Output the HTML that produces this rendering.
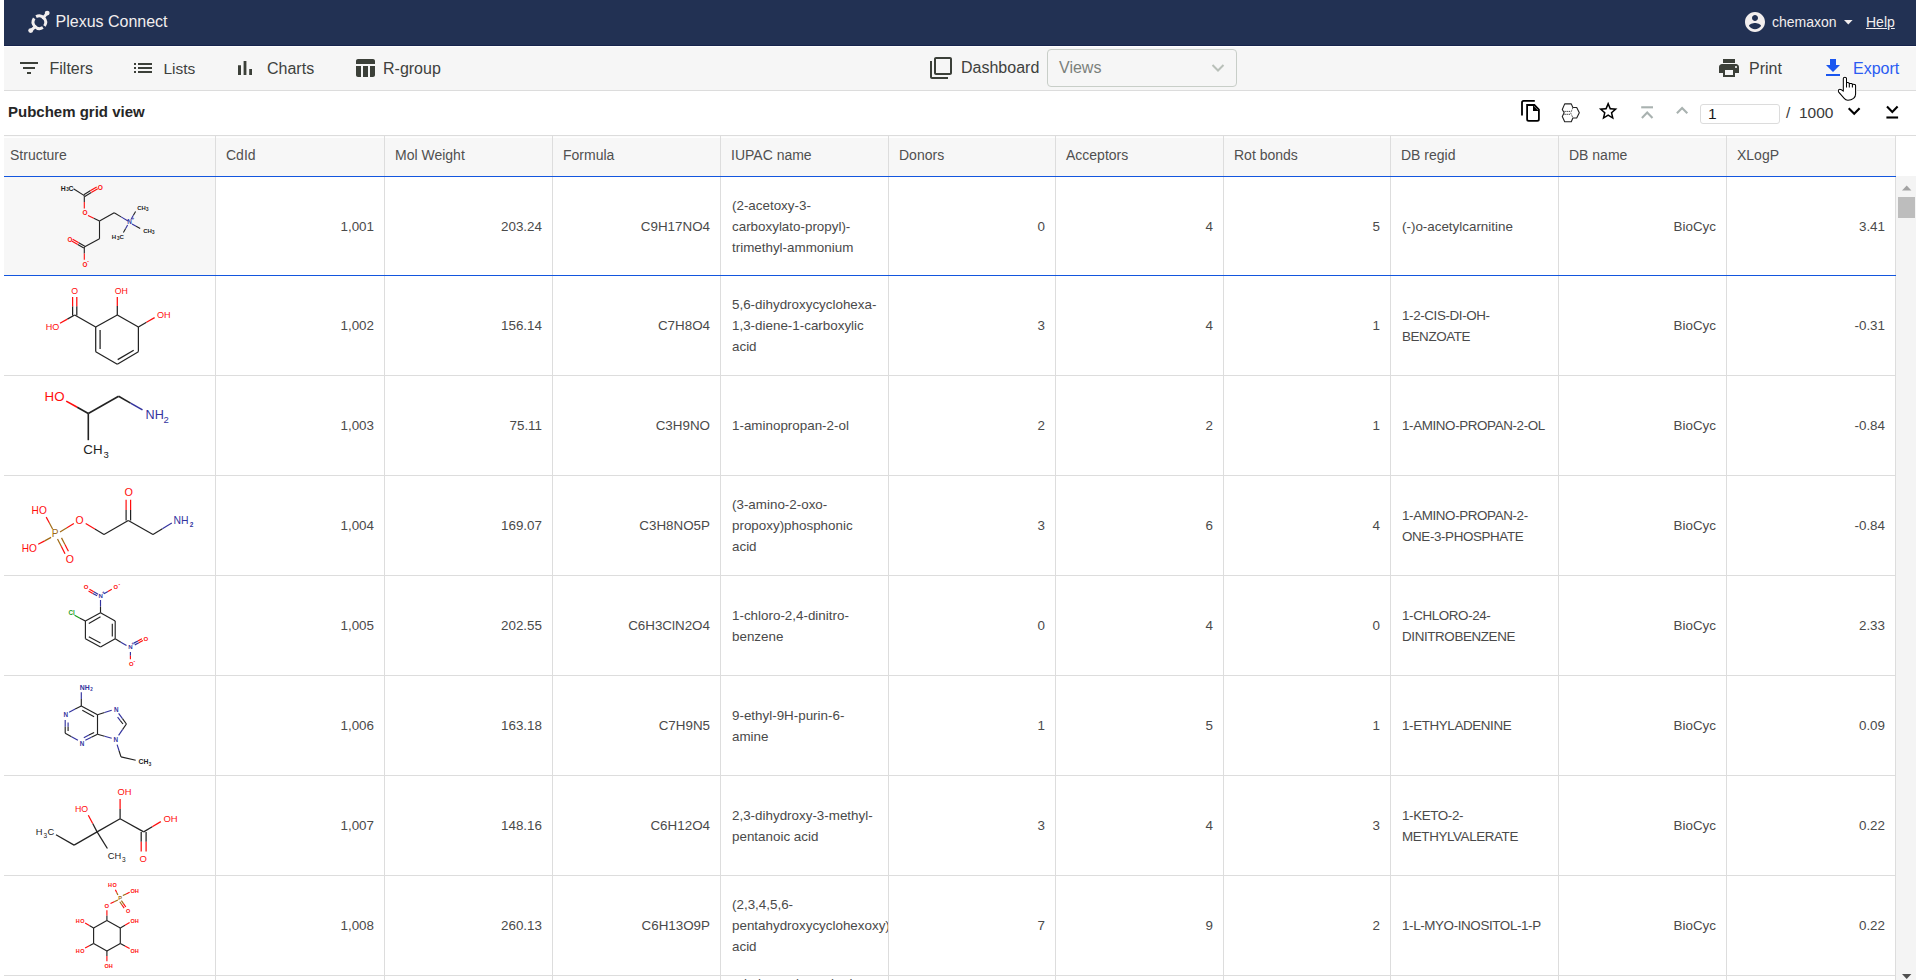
<!DOCTYPE html><html><head><meta charset="utf-8"><style>*{box-sizing:border-box;margin:0;padding:0}
html,body{width:1920px;height:980px;overflow:hidden;background:#fff;font-family:"Liberation Sans",sans-serif;}
.abs{position:absolute}
#hdr{position:absolute;left:4px;top:0;width:1912px;height:46px;background:#223153;border-bottom:1px solid #16234c}
#hdr .t{position:absolute;color:#f2eeee;white-space:nowrap}
#tb{position:absolute;left:4px;top:47px;width:1912px;height:44px;background:#f6f6f6;border-bottom:1px solid #dcdcdc}
.tt{position:absolute;color:#3e413d;white-space:nowrap;font-size:16px}
#tb svg{position:absolute}
#title{position:absolute;left:8px;top:103px;font-weight:bold;font-size:15px;color:#262626;white-space:nowrap}
#grid{position:absolute;left:4px;top:135px;width:1912px;height:845px;border-top:1px solid #dcdcdc;overflow:hidden}
.hrow{position:absolute;left:0;top:0;height:40px;width:1892px;background:linear-gradient(#fbfbfb 0,#fbfbfb 1px,#fefefe 1px,#fefefe 2px,#f7f7f7 2px)}
.hc{position:absolute;top:0;height:40px;border-right:1px solid #dddddd;font-size:14px;color:#505050;padding:11px 0 0 10px;white-space:nowrap}
.row{position:absolute;left:0;width:1892px;height:100px;border-bottom:1px solid #dddddd}
.c{position:absolute;top:0;border-right:1px solid #dddddd;font-size:13.4px;color:#4a4a4a;line-height:21px;display:flex;align-items:center;overflow:hidden;white-space:nowrap}
.c.r{justify-content:flex-end;padding-right:10px}
.c.l{padding-left:11px}
.sel{border-top:1px solid #1356de;border-bottom:1px solid #1356de}
svg text{font-family:"Liberation Sans",sans-serif}
</style></head><body>
<div id="hdr">
  <svg class="abs" style="left:16px;top:5px" width="34" height="34" viewBox="0 0 34 34">
    <g fill="none" stroke="#f2eeee" stroke-width="2.9" stroke-linecap="butt">
      <path d="M16.1 11.6 A6.5 6.5 0 0 1 24.5 21.0"/>
      <path d="M22.9 22.6 A6.5 6.5 0 0 1 14.2 13.4"/>
    </g>
    <g fill="none" stroke="#f2eeee" stroke-width="2.9" stroke-linecap="round">
      <path d="M23.2 12.9 L27.0 8.4"/>
      <path d="M15.3 21.6 L11.0 25.4"/>
    </g>
    <circle cx="27.2" cy="8.1" r="2.45" fill="#f2eeee"/>
    <circle cx="10.7" cy="25.6" r="2.45" fill="#f2eeee"/>
  </svg>
  <div class="t" style="left:51.5px;top:13px;font-size:16px">Plexus Connect</div>
  <svg class="abs" style="left:1739px;top:10px" width="24" height="24" viewBox="0 0 24 24"><path fill="#f2eeee" d="M12 2C6.48 2 2 6.48 2 12s4.48 10 10 10 10-4.48 10-10S17.52 2 12 2zm0 3c1.66 0 3 1.34 3 3s-1.34 3-3 3-3-1.34-3-3 1.34-3 3-3zm0 14.2c-2.5 0-4.71-1.28-6-3.22.03-1.99 4-3.08 6-3.08 1.99 0 5.97 1.09 6 3.08-1.29 1.94-3.5 3.22-6 3.22z"/></svg>
  <div class="t" style="left:1768px;top:14px;font-size:14px">chemaxon</div>
  <svg class="abs" style="left:1840px;top:19.5px" width="9" height="5"><path d="M0 0h8.6L4.3 4.6z" fill="#f2eeee"/></svg>
  <div class="t" style="left:1862px;top:14px;font-size:14px;text-decoration:underline">Help</div>
</div>
<div id="tb">
  <svg style="left:13px;top:9px" width="24" height="24" viewBox="0 0 24 24"><path fill="#3c4039" d="M10 18h4v-2h-4v2zM3 6v2h18V6H3zm3 7h12v-2H6v2z"/></svg>
  <div class="tt" style="left:45.5px;top:13px;font-size:16px">Filters</div>
  <svg style="left:127px;top:9px" width="24" height="24" viewBox="0 0 24 24"><path fill="#3c4039" d="M3 13h2v-2H3v2zm0 4h2v-2H3v2zm0-8h2V7H3v2zm4 4h14v-2H7v2zm0 4h14v-2H7v2zM7 7v2h14V7H7z"/></svg>
  <div class="tt" style="left:159.5px;top:13px;font-size:15.5px">Lists</div>
  <svg style="left:229px;top:9px" width="24" height="24" viewBox="0 0 24 24"><path fill="#3c4039" d="M5 9.2h3V19H5zM10.6 5h2.8v14h-2.8zm5.6 8H19v6h-2.8z"/></svg>
  <div class="tt" style="left:263px;top:13px">Charts</div>
  <svg style="left:349px;top:9px" width="24" height="24" viewBox="0 0 24 24"><path fill="#3c4039" d="M10 10.02h5V21h-5zM17 21h3c1.1 0 2-.9 2-2v-9h-5v11zm3-18H5c-1.1 0-2 .9-2 2v3h19V5c0-1.1-.9-2-2-2zM3 19c0 1.1.9 2 2 2h3V10H3v9z"/></svg>
  <div class="tt" style="left:379px;top:13px">R-group</div>
  <svg style="left:925px;top:9px" width="24" height="24" viewBox="0 0 24 24"><path fill="#3c4039" d="M3 5H1v16c0 1.1.9 2 2 2h16v-2H3V5zm18-4H7c-1.1 0-2 .9-2 2v14c0 1.1.9 2 2 2h14c1.1 0 2-.9 2-2V3c0-1.1-.9-2-2-2zm0 16H7V3h14v14z"/></svg>
  <div class="tt" style="left:957px;top:12px;font-size:16px">Dashboard</div>
  <div class="abs" style="left:1043px;top:2px;width:190px;height:38px;border:1px solid #c8cec8;border-radius:4px"></div>
  <div class="tt" style="left:1055px;top:12px;font-size:16px;color:#7b807b">Views</div>
  <svg style="left:1207px;top:16px" width="14" height="10" viewBox="0 0 14 10"><path d="M1.5 2 L7 7.5 L12.5 2" fill="none" stroke="#b9c0b9" stroke-width="2"/></svg>
  <svg style="left:1713px;top:9px" width="24" height="24" viewBox="0 0 24 24"><path fill="#3c4039" d="M19 8H5c-1.66 0-3 1.34-3 3v6h4v4h12v-4h4v-6c0-1.66-1.34-3-3-3zm-3 11H8v-5h8v5zm3-7c-.55 0-1-.45-1-1s.45-1 1-1 1 .45 1 1-.45 1-1 1zm-1-9H6v4h12V3z"/></svg>
  <div class="tt" style="left:1745px;top:13px">Print</div>
  <svg style="left:1817px;top:9px" width="24" height="24" viewBox="0 0 24 24"><path fill="#1a56f0" d="M19 9h-4V3H9v6H5l7 7 7-7zM5 18v2h14v-2H5z"/></svg>
  <div class="tt" style="left:1849px;top:13px;color:#2a5cf2">Export</div>
</div>
<div id="title">Pubchem grid view</div>
<div class="abs" style="left:1700px;top:104px;width:80px;height:20px;border:1px solid #dcdcdc;border-radius:3px"></div>
<div class="abs" style="left:1708px;top:105px;font-size:15.5px;color:#1a1a1a">1</div>
<div class="abs" style="left:1786px;top:104px;font-size:15.5px;color:#3a3a3a;white-space:nowrap">/ &nbsp;1000</div>
<svg class="abs" style="left:0;top:0" width="1920" height="130" viewBox="0 0 1920 130">
<g fill="none" stroke="#000" stroke-width="1.8">
<path d="M1522 115.6 V102.5 Q1522 100.9 1523.6 100.9 H1534.8"/>
<path d="M1527.1 105.0 H1534.4 L1538.9 109.6 V119.2 Q1538.9 120.8 1537.3 120.8 H1528.7 Q1527.1 120.8 1527.1 119.2 Z"/>
</g>
<path d="M1533.0 105.3 V111.0 H1538.7 Z" fill="#000"/>
<g fill="none" stroke="#222" stroke-width="1.1" stroke-linejoin="round">
<path d="M1564.71 103.86 H1571.29 L1572.86 107.43 H1576.71 L1579.29 112.86 L1576.71 118.0 H1572.86 L1571.29 121.71 H1564.71 L1562.29 116.43 L1564.14 112.86 L1562.29 109.43 Z"/>
</g>
<g fill="none" stroke="#333" stroke-width="0.95" stroke-dasharray="1.4 0.7">
<path d="M1564.4 111.4 H1570.6 M1564.4 114.3 H1570.6"/>
</g>
<path d="M1573.0 107.6 L1570.6 112.86 L1573.0 118.0" fill="none" stroke="#555" stroke-width="0.9" stroke-dasharray="2 0.8"/>
<g fill="none" stroke="#a9b2b0" stroke-width="2.1">
<path d="M1641.2 107.3 H1653.0"/>
<path d="M1641.9 117.9 L1647.2 112.5 L1652.5 117.9"/>
<path d="M1676.9 113.3 L1682.1 108.1 L1687.3 113.3"/>
</g>
<g fill="none" stroke="#000" stroke-width="2.1">
<path d="M1848.7 108.2 L1854.2 113.7 L1859.6 108.2"/>
<path d="M1887.0 106.6 L1892.3 112.0 L1897.6 106.6"/>
<path d="M1886.4 117.5 H1898.1"/>
</g>
</svg>
<svg class="abs" style="left:1596.6px;top:99.9px" width="22.3" height="22.3" viewBox="0 0 24 24"><path fill="#000" d="M22 9.24l-7.19-.62L12 2 9.19 8.63 2 9.24l5.46 4.73L5.82 21 12 17.27 18.18 21l-1.63-7.03L22 9.24zM12 15.4l-3.76 2.27 1-4.28-3.32-2.88 4.38-.38L12 6.1l1.71 4.04 4.38.38-3.32 2.88 1 4.28L12 15.4z"/></svg>

<div id="grid">
<div class="hrow">
<div class="hc" style="left:0px;width:212px;padding-left:6px;">Structure</div>
<div class="hc" style="left:212px;width:169px;">CdId</div>
<div class="hc" style="left:381px;width:168px;">Mol Weight</div>
<div class="hc" style="left:549px;width:168px;">Formula</div>
<div class="hc" style="left:717px;width:168px;">IUPAC name</div>
<div class="hc" style="left:885px;width:167px;">Donors</div>
<div class="hc" style="left:1052px;width:168px;">Acceptors</div>
<div class="hc" style="left:1220px;width:167px;">Rot bonds</div>
<div class="hc" style="left:1387px;width:168px;">DB regid</div>
<div class="hc" style="left:1555px;width:168px;">DB name</div>
<div class="hc" style="left:1723px;width:169px;">XLogP</div>
</div>
<div class="row sel" style="top:40px">
<div class="c" style="left:0;width:212px;height:98px;background:#f7f7f7;"><svg style="position:absolute;left:0;top:0" width="211" height="98" viewBox="4 177 211 98" stroke-linecap="butt"><line x1="73.50" y1="188.80" x2="84.30" y2="195.60" stroke="#222" stroke-width="1.1"/><line x1="84.82" y1="196.46" x2="91.27" y2="192.56" stroke="#222" stroke-width="1.1"/><line x1="91.27" y1="192.56" x2="97.72" y2="188.66" stroke="#ff0d0d" stroke-width="1.1"/><line x1="83.78" y1="194.74" x2="90.23" y2="190.84" stroke="#222" stroke-width="1.1"/><line x1="90.23" y1="190.84" x2="96.68" y2="186.94" stroke="#ff0d0d" stroke-width="1.1"/><line x1="84.30" y1="195.60" x2="84.30" y2="202.05" stroke="#222" stroke-width="1.1"/><line x1="84.30" y1="202.05" x2="84.30" y2="208.50" stroke="#ff0d0d" stroke-width="1.1"/><line x1="88.00" y1="215.60" x2="93.75" y2="218.35" stroke="#ff0d0d" stroke-width="1.1"/><line x1="93.75" y1="218.35" x2="99.50" y2="221.10" stroke="#222" stroke-width="1.1"/><line x1="99.50" y1="221.10" x2="114.20" y2="212.80" stroke="#222" stroke-width="1.1"/><line x1="114.20" y1="212.80" x2="121.10" y2="216.90" stroke="#222" stroke-width="1.1"/><line x1="121.10" y1="216.90" x2="128.00" y2="221.00" stroke="#33339e" stroke-width="1.1"/><line x1="131.20" y1="219.00" x2="133.40" y2="215.25" stroke="#33339e" stroke-width="1.1"/><line x1="133.40" y1="215.25" x2="135.60" y2="211.50" stroke="#222" stroke-width="1.1"/><line x1="132.00" y1="224.00" x2="136.10" y2="226.20" stroke="#33339e" stroke-width="1.1"/><line x1="136.10" y1="226.20" x2="140.20" y2="228.40" stroke="#222" stroke-width="1.1"/><line x1="127.60" y1="225.00" x2="125.50" y2="228.80" stroke="#33339e" stroke-width="1.1"/><line x1="125.50" y1="228.80" x2="123.40" y2="232.60" stroke="#222" stroke-width="1.1"/><line x1="99.50" y1="221.10" x2="99.50" y2="238.80" stroke="#222" stroke-width="1.1"/><line x1="99.50" y1="238.80" x2="84.30" y2="247.10" stroke="#222" stroke-width="1.1"/><line x1="84.80" y1="246.23" x2="78.75" y2="242.78" stroke="#222" stroke-width="1.1"/><line x1="78.75" y1="242.78" x2="72.70" y2="239.33" stroke="#ff0d0d" stroke-width="1.1"/><line x1="83.80" y1="247.97" x2="77.75" y2="244.52" stroke="#222" stroke-width="1.1"/><line x1="77.75" y1="244.52" x2="71.70" y2="241.07" stroke="#ff0d0d" stroke-width="1.1"/><line x1="84.30" y1="247.10" x2="84.30" y2="253.45" stroke="#222" stroke-width="1.1"/><line x1="84.30" y1="253.45" x2="84.30" y2="259.80" stroke="#ff0d0d" stroke-width="1.1"/><text x="60.80" y="190.60" fill="#222" font-size="6.86" font-weight="bold">H</text><text x="66.20" y="191.40" fill="#222" font-size="4.50" font-weight="bold">3</text><text x="68.60" y="190.60" fill="#222" font-size="6.86" font-weight="bold">C</text><text x="97.80" y="189.80" fill="#ff0d0d" font-size="6.58" font-weight="bold">O</text><text x="82.50" y="215.00" fill="#ff0d0d" font-size="6.45" font-weight="bold">O</text><text x="127.30" y="224.40" fill="#33339e" font-size="6.31" font-weight="bold">N</text><text x="131.40" y="220.00" fill="#33339e" font-size="4.50" font-weight="bold">+</text><text x="137.30" y="209.60" fill="#222" font-size="5.90" font-weight="bold">CH</text><text x="146.00" y="210.50" fill="#222" font-size="4.50" font-weight="bold">3</text><text x="143.20" y="233.00" fill="#222" font-size="6.04" font-weight="bold">CH</text><text x="152.00" y="234.00" fill="#222" font-size="4.50" font-weight="bold">3</text><text x="111.80" y="239.20" fill="#222" font-size="6.04" font-weight="bold">H</text><text x="117.00" y="240.00" fill="#222" font-size="4.50" font-weight="bold">3</text><text x="119.40" y="239.20" fill="#222" font-size="6.04" font-weight="bold">C</text><text x="67.40" y="241.60" fill="#ff0d0d" font-size="6.31" font-weight="bold">O</text><text x="82.50" y="266.60" fill="#ff0d0d" font-size="6.31" font-weight="bold">O</text><text x="87.30" y="263.00" fill="#ff0d0d" font-size="5.00" font-weight="bold">-</text></svg></div>
<div class="c r" style="left:212px;width:169px;height:98px;"><div>1,001</div></div>
<div class="c r" style="left:381px;width:168px;height:98px;"><div>203.24</div></div>
<div class="c r" style="left:549px;width:168px;height:98px;"><div>C9H17NO4</div></div>
<div class="c l" style="left:717px;width:168px;height:98px;"><div>(2-acetoxy-3-<br>carboxylato-propyl)-<br>trimethyl-ammonium</div></div>
<div class="c r" style="left:885px;width:167px;height:98px;"><div>0</div></div>
<div class="c r" style="left:1052px;width:168px;height:98px;"><div>4</div></div>
<div class="c r" style="left:1220px;width:167px;height:98px;"><div>5</div></div>
<div class="c l" style="left:1387px;width:168px;height:98px;"><div>(-)o-acetylcarnitine</div></div>
<div class="c r" style="left:1555px;width:168px;height:98px;"><div>BioCyc</div></div>
<div class="c r" style="left:1723px;width:169px;height:98px;"><div>3.41</div></div>
</div>
<div class="row" style="top:140px">
<div class="c" style="left:0;width:212px;height:99px;"><svg style="position:absolute;left:0;top:0" width="211" height="99" viewBox="4 276 211 99" stroke-linecap="butt"><line x1="95.70" y1="327.00" x2="117.30" y2="315.00" stroke="#222" stroke-width="1.25"/><line x1="117.30" y1="315.00" x2="138.40" y2="327.00" stroke="#222" stroke-width="1.25"/><line x1="138.40" y1="327.00" x2="138.40" y2="351.70" stroke="#222" stroke-width="1.25"/><line x1="138.40" y1="351.70" x2="117.30" y2="364.20" stroke="#222" stroke-width="1.25"/><line x1="117.30" y1="364.20" x2="95.70" y2="351.70" stroke="#222" stroke-width="1.25"/><line x1="95.70" y1="351.70" x2="95.70" y2="327.00" stroke="#222" stroke-width="1.25"/><line x1="100.10" y1="330.00" x2="100.10" y2="349.00" stroke="#222" stroke-width="1.25"/><line x1="117.70" y1="359.60" x2="133.70" y2="350.20" stroke="#222" stroke-width="1.25"/><line x1="95.70" y1="327.00" x2="74.70" y2="315.00" stroke="#222" stroke-width="1.25"/><line x1="72.60" y1="315.60" x2="72.60" y2="306.30" stroke="#222" stroke-width="1.25"/><line x1="72.60" y1="306.30" x2="72.60" y2="297.00" stroke="#ff0d0d" stroke-width="1.25"/><line x1="76.80" y1="315.60" x2="76.80" y2="306.30" stroke="#222" stroke-width="1.25"/><line x1="76.80" y1="306.30" x2="76.80" y2="297.00" stroke="#ff0d0d" stroke-width="1.25"/><line x1="74.70" y1="315.00" x2="67.35" y2="319.15" stroke="#222" stroke-width="1.25"/><line x1="67.35" y1="319.15" x2="60.00" y2="323.30" stroke="#ff0d0d" stroke-width="1.25"/><line x1="117.30" y1="315.00" x2="117.30" y2="306.00" stroke="#222" stroke-width="1.25"/><line x1="117.30" y1="306.00" x2="117.30" y2="297.00" stroke="#ff0d0d" stroke-width="1.25"/><line x1="138.40" y1="327.00" x2="146.50" y2="322.30" stroke="#222" stroke-width="1.25"/><line x1="146.50" y1="322.30" x2="154.60" y2="317.60" stroke="#ff0d0d" stroke-width="1.25"/><text x="71.20" y="294.00" fill="#ff0d0d" font-size="8.78">O</text><text x="45.80" y="330.00" fill="#ff0d0d" font-size="9.05">HO</text><text x="114.80" y="293.80" fill="#ff0d0d" font-size="8.78">OH</text><text x="156.90" y="318.00" fill="#ff0d0d" font-size="9.05">OH</text></svg></div>
<div class="c r" style="left:212px;width:169px;height:99px;"><div>1,002</div></div>
<div class="c r" style="left:381px;width:168px;height:99px;"><div>156.14</div></div>
<div class="c r" style="left:549px;width:168px;height:99px;"><div>C7H8O4</div></div>
<div class="c l" style="left:717px;width:168px;height:99px;"><div>5,6-dihydroxycyclohexa-<br>1,3-diene-1-carboxylic<br>acid</div></div>
<div class="c r" style="left:885px;width:167px;height:99px;"><div>3</div></div>
<div class="c r" style="left:1052px;width:168px;height:99px;"><div>4</div></div>
<div class="c r" style="left:1220px;width:167px;height:99px;"><div>1</div></div>
<div class="c l" style="left:1387px;width:168px;height:99px;letter-spacing:-0.38px;"><div>1-2-CIS-DI-OH-<br>BENZOATE</div></div>
<div class="c r" style="left:1555px;width:168px;height:99px;"><div>BioCyc</div></div>
<div class="c r" style="left:1723px;width:169px;height:99px;"><div>-0.31</div></div>
</div>
<div class="row" style="top:240px">
<div class="c" style="left:0;width:212px;height:99px;"><svg style="position:absolute;left:0;top:0" width="211" height="99" viewBox="4 376 211 99" stroke-linecap="butt"><line x1="66.20" y1="401.10" x2="77.25" y2="407.30" stroke="#ff0d0d" stroke-width="1.6"/><line x1="77.25" y1="407.30" x2="88.30" y2="413.50" stroke="#222" stroke-width="1.6"/><line x1="88.30" y1="413.50" x2="118.60" y2="396.30" stroke="#222" stroke-width="1.6"/><line x1="118.60" y1="396.30" x2="130.55" y2="403.10" stroke="#222" stroke-width="1.6"/><line x1="130.55" y1="403.10" x2="142.50" y2="409.90" stroke="#33339e" stroke-width="1.6"/><line x1="88.30" y1="413.50" x2="88.30" y2="440.20" stroke="#222" stroke-width="1.6"/><text x="44.60" y="400.70" fill="#ff0d0d" font-size="13.31">HO</text><text x="145.60" y="418.60" fill="#33339e" font-size="12.62">NH</text><text x="163.60" y="422.80" fill="#33339e" font-size="9.50">2</text><text x="83.30" y="454.00" fill="#222" font-size="13.31">CH</text><text x="103.40" y="457.80" fill="#222" font-size="9.50">3</text></svg></div>
<div class="c r" style="left:212px;width:169px;height:99px;"><div>1,003</div></div>
<div class="c r" style="left:381px;width:168px;height:99px;"><div>75.11</div></div>
<div class="c r" style="left:549px;width:168px;height:99px;"><div>C3H9NO</div></div>
<div class="c l" style="left:717px;width:168px;height:99px;"><div>1-aminopropan-2-ol</div></div>
<div class="c r" style="left:885px;width:167px;height:99px;"><div>2</div></div>
<div class="c r" style="left:1052px;width:168px;height:99px;"><div>2</div></div>
<div class="c r" style="left:1220px;width:167px;height:99px;"><div>1</div></div>
<div class="c l" style="left:1387px;width:168px;height:99px;letter-spacing:-0.38px;"><div>1-AMINO-PROPAN-2-OL</div></div>
<div class="c r" style="left:1555px;width:168px;height:99px;"><div>BioCyc</div></div>
<div class="c r" style="left:1723px;width:169px;height:99px;"><div>-0.84</div></div>
</div>
<div class="row" style="top:340px">
<div class="c" style="left:0;width:212px;height:99px;"><svg style="position:absolute;left:0;top:0" width="211" height="99" viewBox="4 476 211 99" stroke-linecap="butt"><line x1="46.20" y1="517.10" x2="49.40" y2="523.05" stroke="#ff0d0d" stroke-width="1.2"/><line x1="49.40" y1="523.05" x2="52.60" y2="529.00" stroke="#a06a14" stroke-width="1.2"/><line x1="60.00" y1="532.00" x2="66.95" y2="527.75" stroke="#a06a14" stroke-width="1.2"/><line x1="66.95" y1="527.75" x2="73.90" y2="523.50" stroke="#ff0d0d" stroke-width="1.2"/><line x1="85.70" y1="523.50" x2="94.85" y2="528.95" stroke="#ff0d0d" stroke-width="1.2"/><line x1="94.85" y1="528.95" x2="104.00" y2="534.40" stroke="#222" stroke-width="1.2"/><line x1="104.00" y1="534.40" x2="128.30" y2="520.40" stroke="#222" stroke-width="1.2"/><line x1="126.10" y1="520.40" x2="126.10" y2="510.10" stroke="#222" stroke-width="1.2"/><line x1="126.10" y1="510.10" x2="126.10" y2="499.80" stroke="#ff0d0d" stroke-width="1.2"/><line x1="130.60" y1="520.40" x2="130.60" y2="510.10" stroke="#222" stroke-width="1.2"/><line x1="130.60" y1="510.10" x2="130.60" y2="499.80" stroke="#ff0d0d" stroke-width="1.2"/><line x1="128.30" y1="520.40" x2="153.00" y2="534.40" stroke="#222" stroke-width="1.2"/><line x1="153.00" y1="534.40" x2="162.40" y2="528.70" stroke="#222" stroke-width="1.2"/><line x1="162.40" y1="528.70" x2="171.80" y2="523.00" stroke="#33339e" stroke-width="1.2"/><line x1="51.10" y1="537.40" x2="44.65" y2="540.85" stroke="#a06a14" stroke-width="1.2"/><line x1="44.65" y1="540.85" x2="38.20" y2="544.30" stroke="#ff0d0d" stroke-width="1.2"/><line x1="57.50" y1="538.90" x2="61.25" y2="546.30" stroke="#a06a14" stroke-width="1.2"/><line x1="61.25" y1="546.30" x2="65.00" y2="553.70" stroke="#ff0d0d" stroke-width="1.2"/><line x1="61.50" y1="537.90" x2="64.95" y2="544.55" stroke="#a06a14" stroke-width="1.2"/><line x1="64.95" y1="544.55" x2="68.40" y2="551.20" stroke="#ff0d0d" stroke-width="1.2"/><text x="31.60" y="513.60" fill="#ff0d0d" font-size="10.15">HO</text><text x="51.80" y="537.40" fill="#a06a14" font-size="10.15">P</text><text x="75.40" y="523.70" fill="#ff0d0d" font-size="10.43">O</text><text x="124.50" y="495.80" fill="#ff0d0d" font-size="10.84">O</text><text x="173.60" y="523.70" fill="#33339e" font-size="10.43">NH</text><text x="189.80" y="527.20" fill="#33339e" font-size="6.50" font-weight="bold">2</text><text x="21.70" y="551.70" fill="#ff0d0d" font-size="10.15">HO</text><text x="65.70" y="563.10" fill="#ff0d0d" font-size="10.56">O</text></svg></div>
<div class="c r" style="left:212px;width:169px;height:99px;"><div>1,004</div></div>
<div class="c r" style="left:381px;width:168px;height:99px;"><div>169.07</div></div>
<div class="c r" style="left:549px;width:168px;height:99px;"><div>C3H8NO5P</div></div>
<div class="c l" style="left:717px;width:168px;height:99px;"><div>(3-amino-2-oxo-<br>propoxy)phosphonic<br>acid</div></div>
<div class="c r" style="left:885px;width:167px;height:99px;"><div>3</div></div>
<div class="c r" style="left:1052px;width:168px;height:99px;"><div>6</div></div>
<div class="c r" style="left:1220px;width:167px;height:99px;"><div>4</div></div>
<div class="c l" style="left:1387px;width:168px;height:99px;letter-spacing:-0.38px;"><div>1-AMINO-PROPAN-2-<br>ONE-3-PHOSPHATE</div></div>
<div class="c r" style="left:1555px;width:168px;height:99px;"><div>BioCyc</div></div>
<div class="c r" style="left:1723px;width:169px;height:99px;"><div>-0.84</div></div>
</div>
<div class="row" style="top:440px">
<div class="c" style="left:0;width:212px;height:99px;"><svg style="position:absolute;left:0;top:0" width="211" height="99" viewBox="4 576 211 99" stroke-linecap="butt"><line x1="100.50" y1="612.80" x2="115.20" y2="621.10" stroke="#222" stroke-width="1.15"/><line x1="115.20" y1="621.10" x2="115.20" y2="638.70" stroke="#222" stroke-width="1.15"/><line x1="115.20" y1="638.70" x2="100.50" y2="647.10" stroke="#222" stroke-width="1.15"/><line x1="100.50" y1="647.10" x2="85.40" y2="638.70" stroke="#222" stroke-width="1.15"/><line x1="85.40" y1="638.70" x2="85.40" y2="621.10" stroke="#222" stroke-width="1.15"/><line x1="85.40" y1="621.10" x2="100.50" y2="612.80" stroke="#222" stroke-width="1.15"/><line x1="112.30" y1="623.80" x2="112.30" y2="636.60" stroke="#222" stroke-width="1.15"/><line x1="88.80" y1="636.80" x2="100.50" y2="643.10" stroke="#222" stroke-width="1.15"/><line x1="88.80" y1="623.50" x2="100.50" y2="616.70" stroke="#222" stroke-width="1.15"/><line x1="85.40" y1="621.10" x2="80.00" y2="618.15" stroke="#222" stroke-width="1.15"/><line x1="80.00" y1="618.15" x2="74.60" y2="615.20" stroke="#1a9e1a" stroke-width="1.15"/><line x1="100.50" y1="612.80" x2="100.50" y2="606.40" stroke="#222" stroke-width="1.15"/><line x1="100.50" y1="606.40" x2="100.50" y2="600.00" stroke="#33339e" stroke-width="1.15"/><line x1="98.09" y1="594.13" x2="93.79" y2="591.73" stroke="#33339e" stroke-width="1.15"/><line x1="93.79" y1="591.73" x2="89.49" y2="589.33" stroke="#ff0d0d" stroke-width="1.15"/><line x1="97.11" y1="595.87" x2="92.81" y2="593.47" stroke="#33339e" stroke-width="1.15"/><line x1="92.81" y1="593.47" x2="88.51" y2="591.07" stroke="#ff0d0d" stroke-width="1.15"/><line x1="104.00" y1="593.70" x2="107.90" y2="591.50" stroke="#33339e" stroke-width="1.15"/><line x1="107.90" y1="591.50" x2="111.80" y2="589.30" stroke="#ff0d0d" stroke-width="1.15"/><line x1="115.20" y1="638.70" x2="120.85" y2="642.15" stroke="#222" stroke-width="1.15"/><line x1="120.85" y1="642.15" x2="126.50" y2="645.60" stroke="#33339e" stroke-width="1.15"/><line x1="134.78" y1="644.88" x2="138.83" y2="642.68" stroke="#33339e" stroke-width="1.15"/><line x1="138.83" y1="642.68" x2="142.88" y2="640.48" stroke="#ff0d0d" stroke-width="1.15"/><line x1="133.82" y1="643.12" x2="137.87" y2="640.92" stroke="#33339e" stroke-width="1.15"/><line x1="137.87" y1="640.92" x2="141.92" y2="638.72" stroke="#ff0d0d" stroke-width="1.15"/><line x1="130.40" y1="652.00" x2="130.40" y2="655.65" stroke="#33339e" stroke-width="1.15"/><line x1="130.40" y1="655.65" x2="130.40" y2="659.30" stroke="#ff0d0d" stroke-width="1.15"/><text x="68.40" y="615.40" fill="#1a9e1a" font-size="6.31" font-weight="bold">Cl</text><text x="98.40" y="598.30" fill="#33339e" font-size="6.04" font-weight="bold">N</text><text x="102.00" y="594.00" fill="#33339e" font-size="4.50" font-weight="bold">+</text><text x="83.70" y="589.40" fill="#ff0d0d" font-size="6.04" font-weight="bold">O</text><text x="113.60" y="589.40" fill="#ff0d0d" font-size="5.76" font-weight="bold">O</text><text x="118.40" y="586.00" fill="#ff0d0d" font-size="5.00" font-weight="bold">-</text><text x="128.30" y="649.00" fill="#33339e" font-size="6.04" font-weight="bold">N</text><text x="131.60" y="645.00" fill="#33339e" font-size="4.50" font-weight="bold">+</text><text x="143.60" y="641.20" fill="#ff0d0d" font-size="6.04" font-weight="bold">O</text><text x="128.90" y="666.30" fill="#ff0d0d" font-size="5.90" font-weight="bold">O</text><text x="133.60" y="663.00" fill="#ff0d0d" font-size="5.00" font-weight="bold">-</text></svg></div>
<div class="c r" style="left:212px;width:169px;height:99px;"><div>1,005</div></div>
<div class="c r" style="left:381px;width:168px;height:99px;"><div>202.55</div></div>
<div class="c r" style="left:549px;width:168px;height:99px;"><div>C6H3ClN2O4</div></div>
<div class="c l" style="left:717px;width:168px;height:99px;"><div>1-chloro-2,4-dinitro-<br>benzene</div></div>
<div class="c r" style="left:885px;width:167px;height:99px;"><div>0</div></div>
<div class="c r" style="left:1052px;width:168px;height:99px;"><div>4</div></div>
<div class="c r" style="left:1220px;width:167px;height:99px;"><div>0</div></div>
<div class="c l" style="left:1387px;width:168px;height:99px;letter-spacing:-0.38px;"><div>1-CHLORO-24-<br>DINITROBENZENE</div></div>
<div class="c r" style="left:1555px;width:168px;height:99px;"><div>BioCyc</div></div>
<div class="c r" style="left:1723px;width:169px;height:99px;"><div>2.33</div></div>
</div>
<div class="row" style="top:540px">
<div class="c" style="left:0;width:212px;height:99px;"><svg style="position:absolute;left:0;top:0" width="211" height="99" viewBox="4 676 211 99" stroke-linecap="butt"><line x1="81.30" y1="705.90" x2="81.30" y2="699.05" stroke="#222" stroke-width="1.15"/><line x1="81.30" y1="699.05" x2="81.30" y2="692.20" stroke="#33339e" stroke-width="1.15"/><line x1="81.30" y1="705.90" x2="75.20" y2="709.10" stroke="#222" stroke-width="1.15"/><line x1="75.20" y1="709.10" x2="69.10" y2="712.30" stroke="#33339e" stroke-width="1.15"/><line x1="65.20" y1="720.00" x2="65.20" y2="726.65" stroke="#33339e" stroke-width="1.15"/><line x1="65.20" y1="726.65" x2="65.20" y2="733.30" stroke="#222" stroke-width="1.15"/><line x1="68.10" y1="722.50" x2="68.10" y2="726.75" stroke="#33339e" stroke-width="1.15"/><line x1="68.10" y1="726.75" x2="68.10" y2="731.00" stroke="#222" stroke-width="1.15"/><line x1="65.20" y1="733.30" x2="71.55" y2="736.75" stroke="#222" stroke-width="1.15"/><line x1="71.55" y1="736.75" x2="77.90" y2="740.20" stroke="#33339e" stroke-width="1.15"/><line x1="85.30" y1="740.20" x2="91.40" y2="737.25" stroke="#33339e" stroke-width="1.15"/><line x1="91.40" y1="737.25" x2="97.50" y2="734.30" stroke="#222" stroke-width="1.15"/><line x1="83.80" y1="737.80" x2="88.95" y2="735.10" stroke="#33339e" stroke-width="1.15"/><line x1="88.95" y1="735.10" x2="94.10" y2="732.40" stroke="#222" stroke-width="1.15"/><line x1="97.50" y1="734.30" x2="97.50" y2="714.70" stroke="#222" stroke-width="1.15"/><line x1="97.50" y1="714.70" x2="81.30" y2="705.90" stroke="#222" stroke-width="1.15"/><line x1="94.10" y1="716.70" x2="82.30" y2="710.30" stroke="#222" stroke-width="1.15"/><line x1="97.50" y1="714.70" x2="104.60" y2="712.50" stroke="#222" stroke-width="1.15"/><line x1="104.60" y1="712.50" x2="111.70" y2="710.30" stroke="#33339e" stroke-width="1.15"/><line x1="118.60" y1="713.30" x2="122.50" y2="718.65" stroke="#33339e" stroke-width="1.15"/><line x1="122.50" y1="718.65" x2="126.40" y2="724.00" stroke="#222" stroke-width="1.15"/><line x1="117.60" y1="717.20" x2="120.30" y2="720.60" stroke="#33339e" stroke-width="1.15"/><line x1="120.30" y1="720.60" x2="123.00" y2="724.00" stroke="#222" stroke-width="1.15"/><line x1="126.40" y1="724.00" x2="122.50" y2="729.65" stroke="#222" stroke-width="1.15"/><line x1="122.50" y1="729.65" x2="118.60" y2="735.30" stroke="#33339e" stroke-width="1.15"/><line x1="97.50" y1="734.30" x2="104.60" y2="736.25" stroke="#222" stroke-width="1.15"/><line x1="104.60" y1="736.25" x2="111.70" y2="738.20" stroke="#33339e" stroke-width="1.15"/><line x1="117.10" y1="744.60" x2="119.05" y2="750.75" stroke="#33339e" stroke-width="1.15"/><line x1="119.05" y1="750.75" x2="121.00" y2="756.90" stroke="#222" stroke-width="1.15"/><line x1="121.00" y1="756.90" x2="135.70" y2="760.30" stroke="#222" stroke-width="1.15"/><text x="79.80" y="689.60" fill="#33339e" font-size="6.86" font-weight="bold">NH</text><text x="90.20" y="691.20" fill="#33339e" font-size="4.50" font-weight="bold">2</text><text x="63.60" y="717.00" fill="#33339e" font-size="6.31" font-weight="bold">N</text><text x="79.70" y="745.80" fill="#33339e" font-size="6.31" font-weight="bold">N</text><text x="114.00" y="711.60" fill="#33339e" font-size="6.31" font-weight="bold">N</text><text x="113.50" y="742.00" fill="#33339e" font-size="6.31" font-weight="bold">N</text><text x="138.60" y="764.40" fill="#222" font-size="6.86" font-weight="bold">CH</text><text x="148.80" y="766.00" fill="#222" font-size="4.50" font-weight="bold">3</text></svg></div>
<div class="c r" style="left:212px;width:169px;height:99px;"><div>1,006</div></div>
<div class="c r" style="left:381px;width:168px;height:99px;"><div>163.18</div></div>
<div class="c r" style="left:549px;width:168px;height:99px;"><div>C7H9N5</div></div>
<div class="c l" style="left:717px;width:168px;height:99px;"><div>9-ethyl-9H-purin-6-<br>amine</div></div>
<div class="c r" style="left:885px;width:167px;height:99px;"><div>1</div></div>
<div class="c r" style="left:1052px;width:168px;height:99px;"><div>5</div></div>
<div class="c r" style="left:1220px;width:167px;height:99px;"><div>1</div></div>
<div class="c l" style="left:1387px;width:168px;height:99px;letter-spacing:-0.38px;"><div>1-ETHYLADENINE</div></div>
<div class="c r" style="left:1555px;width:168px;height:99px;"><div>BioCyc</div></div>
<div class="c r" style="left:1723px;width:169px;height:99px;"><div>0.09</div></div>
</div>
<div class="row" style="top:640px">
<div class="c" style="left:0;width:212px;height:99px;"><svg style="position:absolute;left:0;top:0" width="211" height="99" viewBox="4 776 211 99" stroke-linecap="butt"><line x1="56.00" y1="834.80" x2="74.10" y2="845.10" stroke="#222" stroke-width="1.25"/><line x1="74.10" y1="845.10" x2="97.10" y2="831.90" stroke="#222" stroke-width="1.25"/><line x1="97.10" y1="831.90" x2="92.70" y2="823.55" stroke="#222" stroke-width="1.25"/><line x1="92.70" y1="823.55" x2="88.30" y2="815.20" stroke="#ff0d0d" stroke-width="1.25"/><line x1="97.10" y1="831.90" x2="107.40" y2="848.50" stroke="#222" stroke-width="1.25"/><line x1="97.10" y1="831.90" x2="120.10" y2="818.70" stroke="#222" stroke-width="1.25"/><line x1="120.10" y1="818.70" x2="120.10" y2="808.90" stroke="#222" stroke-width="1.25"/><line x1="120.10" y1="808.90" x2="120.10" y2="799.10" stroke="#ff0d0d" stroke-width="1.25"/><line x1="120.10" y1="818.70" x2="143.70" y2="831.90" stroke="#222" stroke-width="1.25"/><line x1="143.70" y1="831.90" x2="152.25" y2="826.75" stroke="#222" stroke-width="1.25"/><line x1="152.25" y1="826.75" x2="160.80" y2="821.60" stroke="#ff0d0d" stroke-width="1.25"/><line x1="141.20" y1="831.90" x2="141.20" y2="841.70" stroke="#222" stroke-width="1.25"/><line x1="141.20" y1="841.70" x2="141.20" y2="851.50" stroke="#ff0d0d" stroke-width="1.25"/><line x1="146.10" y1="831.90" x2="146.10" y2="841.70" stroke="#222" stroke-width="1.25"/><line x1="146.10" y1="841.70" x2="146.10" y2="851.50" stroke="#ff0d0d" stroke-width="1.25"/><text x="35.80" y="834.80" fill="#222" font-size="9.33">H</text><text x="43.50" y="837.90" fill="#222" font-size="6.50">3</text><text x="47.40" y="834.80" fill="#222" font-size="9.33">C</text><text x="74.90" y="811.80" fill="#ff0d0d" font-size="8.78">HO</text><text x="107.70" y="859.30" fill="#222" font-size="9.33">CH</text><text x="122.00" y="862.00" fill="#222" font-size="6.50">3</text><text x="117.50" y="795.10" fill="#ff0d0d" font-size="9.33">OH</text><text x="163.50" y="822.10" fill="#ff0d0d" font-size="9.47">OH</text><text x="139.50" y="862.30" fill="#ff0d0d" font-size="9.47">O</text></svg></div>
<div class="c r" style="left:212px;width:169px;height:99px;"><div>1,007</div></div>
<div class="c r" style="left:381px;width:168px;height:99px;"><div>148.16</div></div>
<div class="c r" style="left:549px;width:168px;height:99px;"><div>C6H12O4</div></div>
<div class="c l" style="left:717px;width:168px;height:99px;"><div>2,3-dihydroxy-3-methyl-<br>pentanoic acid</div></div>
<div class="c r" style="left:885px;width:167px;height:99px;"><div>3</div></div>
<div class="c r" style="left:1052px;width:168px;height:99px;"><div>4</div></div>
<div class="c r" style="left:1220px;width:167px;height:99px;"><div>3</div></div>
<div class="c l" style="left:1387px;width:168px;height:99px;letter-spacing:-0.38px;"><div>1-KETO-2-<br>METHYLVALERATE</div></div>
<div class="c r" style="left:1555px;width:168px;height:99px;"><div>BioCyc</div></div>
<div class="c r" style="left:1723px;width:169px;height:99px;"><div>0.22</div></div>
</div>
<div class="row" style="top:740px">
<div class="c" style="left:0;width:212px;height:99px;"><svg style="position:absolute;left:0;top:0" width="211" height="99" viewBox="4 876 211 99" stroke-linecap="butt"><line x1="106.90" y1="920.60" x2="120.30" y2="927.90" stroke="#222" stroke-width="1.15"/><line x1="120.30" y1="927.90" x2="120.30" y2="943.60" stroke="#222" stroke-width="1.15"/><line x1="120.30" y1="943.60" x2="106.90" y2="951.00" stroke="#222" stroke-width="1.15"/><line x1="106.90" y1="951.00" x2="93.60" y2="943.60" stroke="#222" stroke-width="1.15"/><line x1="93.60" y1="943.60" x2="93.60" y2="927.90" stroke="#222" stroke-width="1.15"/><line x1="93.60" y1="927.90" x2="106.90" y2="920.60" stroke="#222" stroke-width="1.15"/><line x1="106.90" y1="920.60" x2="106.90" y2="915.45" stroke="#222" stroke-width="1.15"/><line x1="106.90" y1="915.45" x2="106.90" y2="910.30" stroke="#ff0d0d" stroke-width="1.15"/><line x1="110.50" y1="903.40" x2="114.20" y2="901.70" stroke="#ff0d0d" stroke-width="1.15"/><line x1="114.20" y1="901.70" x2="117.90" y2="900.00" stroke="#a06a14" stroke-width="1.15"/><line x1="117.90" y1="895.10" x2="116.65" y2="892.40" stroke="#a06a14" stroke-width="1.15"/><line x1="116.65" y1="892.40" x2="115.40" y2="889.70" stroke="#ff0d0d" stroke-width="1.15"/><line x1="122.80" y1="895.60" x2="126.20" y2="893.90" stroke="#a06a14" stroke-width="1.15"/><line x1="126.20" y1="893.90" x2="129.60" y2="892.20" stroke="#ff0d0d" stroke-width="1.15"/><line x1="119.78" y1="901.77" x2="121.98" y2="904.97" stroke="#a06a14" stroke-width="1.15"/><line x1="121.98" y1="904.97" x2="124.18" y2="908.17" stroke="#ff0d0d" stroke-width="1.15"/><line x1="121.42" y1="900.63" x2="123.62" y2="903.83" stroke="#a06a14" stroke-width="1.15"/><line x1="123.62" y1="903.83" x2="125.82" y2="907.03" stroke="#ff0d0d" stroke-width="1.15"/><line x1="93.60" y1="927.90" x2="89.35" y2="925.45" stroke="#222" stroke-width="1.15"/><line x1="89.35" y1="925.45" x2="85.10" y2="923.00" stroke="#ff0d0d" stroke-width="1.15"/><line x1="120.30" y1="927.90" x2="124.95" y2="925.20" stroke="#222" stroke-width="1.15"/><line x1="124.95" y1="925.20" x2="129.60" y2="922.50" stroke="#ff0d0d" stroke-width="1.15"/><line x1="93.60" y1="943.60" x2="89.35" y2="945.80" stroke="#222" stroke-width="1.15"/><line x1="89.35" y1="945.80" x2="85.10" y2="948.00" stroke="#ff0d0d" stroke-width="1.15"/><line x1="120.30" y1="943.60" x2="124.95" y2="946.05" stroke="#222" stroke-width="1.15"/><line x1="124.95" y1="946.05" x2="129.60" y2="948.50" stroke="#ff0d0d" stroke-width="1.15"/><line x1="106.90" y1="951.00" x2="106.90" y2="956.10" stroke="#222" stroke-width="1.15"/><line x1="106.90" y1="956.10" x2="106.90" y2="961.20" stroke="#ff0d0d" stroke-width="1.15"/><text x="104.50" y="908.30" fill="#ff0d0d" font-size="5.90" font-weight="bold">O</text><text x="118.20" y="900.20" fill="#a06a14" font-size="5.62" font-weight="bold">P</text><text x="108.00" y="887.40" fill="#ff0d0d" font-size="5.49" font-weight="bold" letter-spacing="0.6">HO</text><text x="130.50" y="893.30" fill="#ff0d0d" font-size="5.62" font-weight="bold">OH</text><text x="126.00" y="913.30" fill="#ff0d0d" font-size="5.49" font-weight="bold">O</text><text x="75.70" y="923.10" fill="#ff0d0d" font-size="5.49" font-weight="bold" letter-spacing="0.6">HO</text><text x="130.50" y="923.10" fill="#ff0d0d" font-size="5.49" font-weight="bold">OH</text><text x="75.70" y="953.00" fill="#ff0d0d" font-size="5.49" font-weight="bold" letter-spacing="0.6">HO</text><text x="130.50" y="953.00" fill="#ff0d0d" font-size="5.49" font-weight="bold">OH</text><text x="104.60" y="968.20" fill="#ff0d0d" font-size="5.49" font-weight="bold">OH</text></svg></div>
<div class="c r" style="left:212px;width:169px;height:99px;"><div>1,008</div></div>
<div class="c r" style="left:381px;width:168px;height:99px;"><div>260.13</div></div>
<div class="c r" style="left:549px;width:168px;height:99px;"><div>C6H13O9P</div></div>
<div class="c l" style="left:717px;width:168px;height:99px;"><div>(2,3,4,5,6-<br>pentahydroxycyclohexoxy)<br>acid</div></div>
<div class="c r" style="left:885px;width:167px;height:99px;"><div>7</div></div>
<div class="c r" style="left:1052px;width:168px;height:99px;"><div>9</div></div>
<div class="c r" style="left:1220px;width:167px;height:99px;"><div>2</div></div>
<div class="c l" style="left:1387px;width:168px;height:99px;letter-spacing:-0.38px;"><div>1-L-MYO-INOSITOL-1-P</div></div>
<div class="c r" style="left:1555px;width:168px;height:99px;"><div>BioCyc</div></div>
<div class="c r" style="left:1723px;width:169px;height:99px;"><div>0.22</div></div>
</div>
<div class="row" style="top:840px">
<div class="c" style="left:0;width:212px;height:99px;"></div>
<div class="c r" style="left:212px;width:169px;height:99px;"><div>1,009</div></div>
<div class="c r" style="left:381px;width:168px;height:99px;"><div>180.16</div></div>
<div class="c r" style="left:549px;width:168px;height:99px;"><div>C6H12O6</div></div>
<div class="c l" style="left:717px;width:168px;height:99px;"><div>orlmlxoxoxlooowlmrl<br>a<br>a<br>a<br>a</div></div>
<div class="c r" style="left:885px;width:167px;height:99px;"><div>1</div></div>
<div class="c r" style="left:1052px;width:168px;height:99px;"><div>6</div></div>
<div class="c r" style="left:1220px;width:167px;height:99px;"><div>5</div></div>
<div class="c l" style="left:1387px;width:168px;height:99px;letter-spacing:-0.38px;"><div>1-X</div></div>
<div class="c r" style="left:1555px;width:168px;height:99px;"><div>BioCyc</div></div>
<div class="c r" style="left:1723px;width:169px;height:99px;"><div>0.10</div></div>
</div>
<div class="abs" style="left:1892px;top:40px;width:20px;height:804px;background:#f4f4f4"></div>
<svg class="abs" style="left:1898px;top:49px" width="10" height="6"><path d="M0 5.5L4.7 0.5L9.4 5.5z" fill="#a3a3a3"/></svg>
<div class="abs" style="left:1894px;top:61px;width:17px;height:21px;background:#bdbdbd"></div>
<svg class="abs" style="left:1898px;top:838px" width="10" height="6"><path d="M0 0L9.4 0L4.7 5z" fill="#505050"/></svg>
</div>
<svg class="abs" style="left:0;top:0" width="1920" height="130" viewBox="0 0 1920 130">
<path d="M1843.3 91.1 V78.6 Q1843.3 77.2 1844.9 77.2 Q1846.5 77.2 1846.5 78.6 V82.6 Q1849.3 82.2 1849.3 83.6 Q1852.4 83.0 1852.4 84.4 Q1855.6 84.0 1855.6 85.6 V93.9 Q1855.6 96.5 1853.6 98.4 Q1851.2 100.2 1847.9 100.2 Q1845.6 100.2 1844.2 98.4 L1838.7 92.1 Q1837.8 90.6 1838.8 89.6 Q1840.3 88.4 1843.3 91.1 Z" fill="#fff" stroke="#fff" stroke-width="2.6" stroke-linejoin="round"/>
<path d="M1843.3 91.1 V78.6 Q1843.3 77.2 1844.9 77.2 Q1846.5 77.2 1846.5 78.6 V82.6 Q1849.3 82.2 1849.3 83.6 Q1852.4 83.0 1852.4 84.4 Q1855.6 84.0 1855.6 85.6 V93.9 Q1855.6 96.5 1853.6 98.4 Q1851.2 100.2 1847.9 100.2 Q1845.6 100.2 1844.2 98.4 L1838.7 92.1 Q1837.8 90.6 1838.8 89.6 Q1840.3 88.4 1843.3 91.1 Z" fill="#fff" stroke="#000" stroke-width="1.05" stroke-linejoin="round"/>
<path d="M1846.5 82.6 V87.6 M1849.3 83.4 V87.6 M1852.4 84.2 V87.6" stroke="#000" stroke-width="1.05" fill="none"/>
</svg>

</body></html>
